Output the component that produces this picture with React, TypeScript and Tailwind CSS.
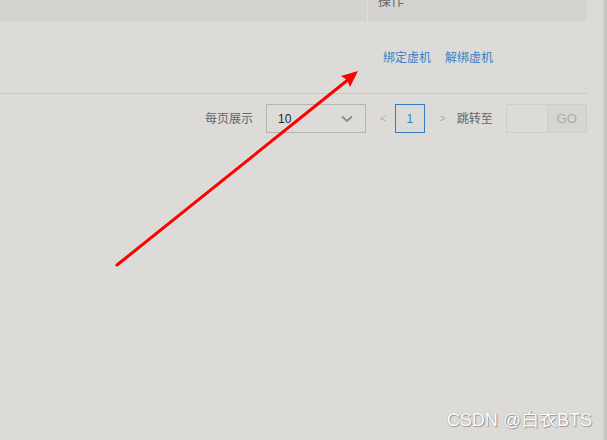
import React from "react";

const font = { fontFamily: '"Liberation Sans", "Noto Sans CJK SC", sans-serif' };

const Arrow: React.FC = () => (
	<svg className="absolute left-0 top-0 pointer-events-none" width="607" height="440">
		<line x1="117" y1="265" x2="349" y2="79" stroke="#ff0000" strokeWidth="3" strokeLinecap="round" />
		<polygon points="358,71 341,76 347,80 350,87" fill="#ff0000" />
	</svg>
);

const Chevron: React.FC = () => (
	<svg width="12" height="8" viewBox="0 0 12 8">
		<path d="M1 1.5 L6 6 L11 1.5" fill="none" stroke="#8f8e8a" strokeWidth="2" />
	</svg>
);

export default function App() {
	return (
		<div className="relative w-[607px] h-[440px] overflow-hidden bg-[#dcdbd7] flex" style={font}>
			<div className="w-[587px] flex flex-col">
				{/* table header */}
				<div className="h-[21px] bg-[#d4d3cf] flex overflow-hidden">
					<div className="w-[368px] border-r border-[#e0dfdb]" />
					<div className="pl-[10px] -mt-[7px] text-[13px] leading-[16px] text-[#666]">操作</div>
				</div>

				{/* actions */}
				<div className="h-[73px] flex items-center gap-[14px] pl-[383px] pt-[2px] text-[12px] text-[#3c7fc6] border-b border-[#c9c8c4]">
					<span>绑定虚机</span>
					<span>解绑虚机</span>
				</div>

				{/* pagination */}
				<div className="mt-[10px] h-[29px] flex items-center pl-[205px] text-[12px]">
					<span className="text-[#666]">每页展示</span>
					<div className="ml-[13px] w-[100px] h-[29px] border border-[#b5b4b0] flex items-center justify-between pl-[11px] pr-[12px]">
						<span className="text-[#222]">10</span>
						<Chevron />
					</div>
					<span className="ml-[14px] text-[10px] text-[#aaa]">&lt;</span>
					<div className="ml-[9px] w-[30px] h-[29px] border border-[#3a7bbf] flex items-center justify-center text-[#3a7bbf]">1</div>
					<span className="ml-[15px] text-[10px] text-[#aaa]">&gt;</span>
					<span className="ml-[11px] text-[#666]">跳转至</span>
					<div className="ml-[13px] w-[42px] h-[29px] border border-[#cfcecb]" />
					<div className="w-[39px] h-[29px] bg-[#d6d5d1] border border-l-0 border-[#cfcecb] flex items-center justify-center text-[13px] text-[#aaa]">GO</div>
				</div>
			</div>
			<div className="flex-1" />
			<div className="w-[4px] bg-gradient-to-r from-[#d0cfcb] to-[#c4c3bf]" />

			<Arrow />

			<div className="absolute right-[15px] bottom-[8px] text-[18px] leading-[24px] text-white [text-shadow:0_0_1px_#888,1px_1px_1px_#999]">
				CSDN @白衣BTS
			</div>
		</div>
	);
}
